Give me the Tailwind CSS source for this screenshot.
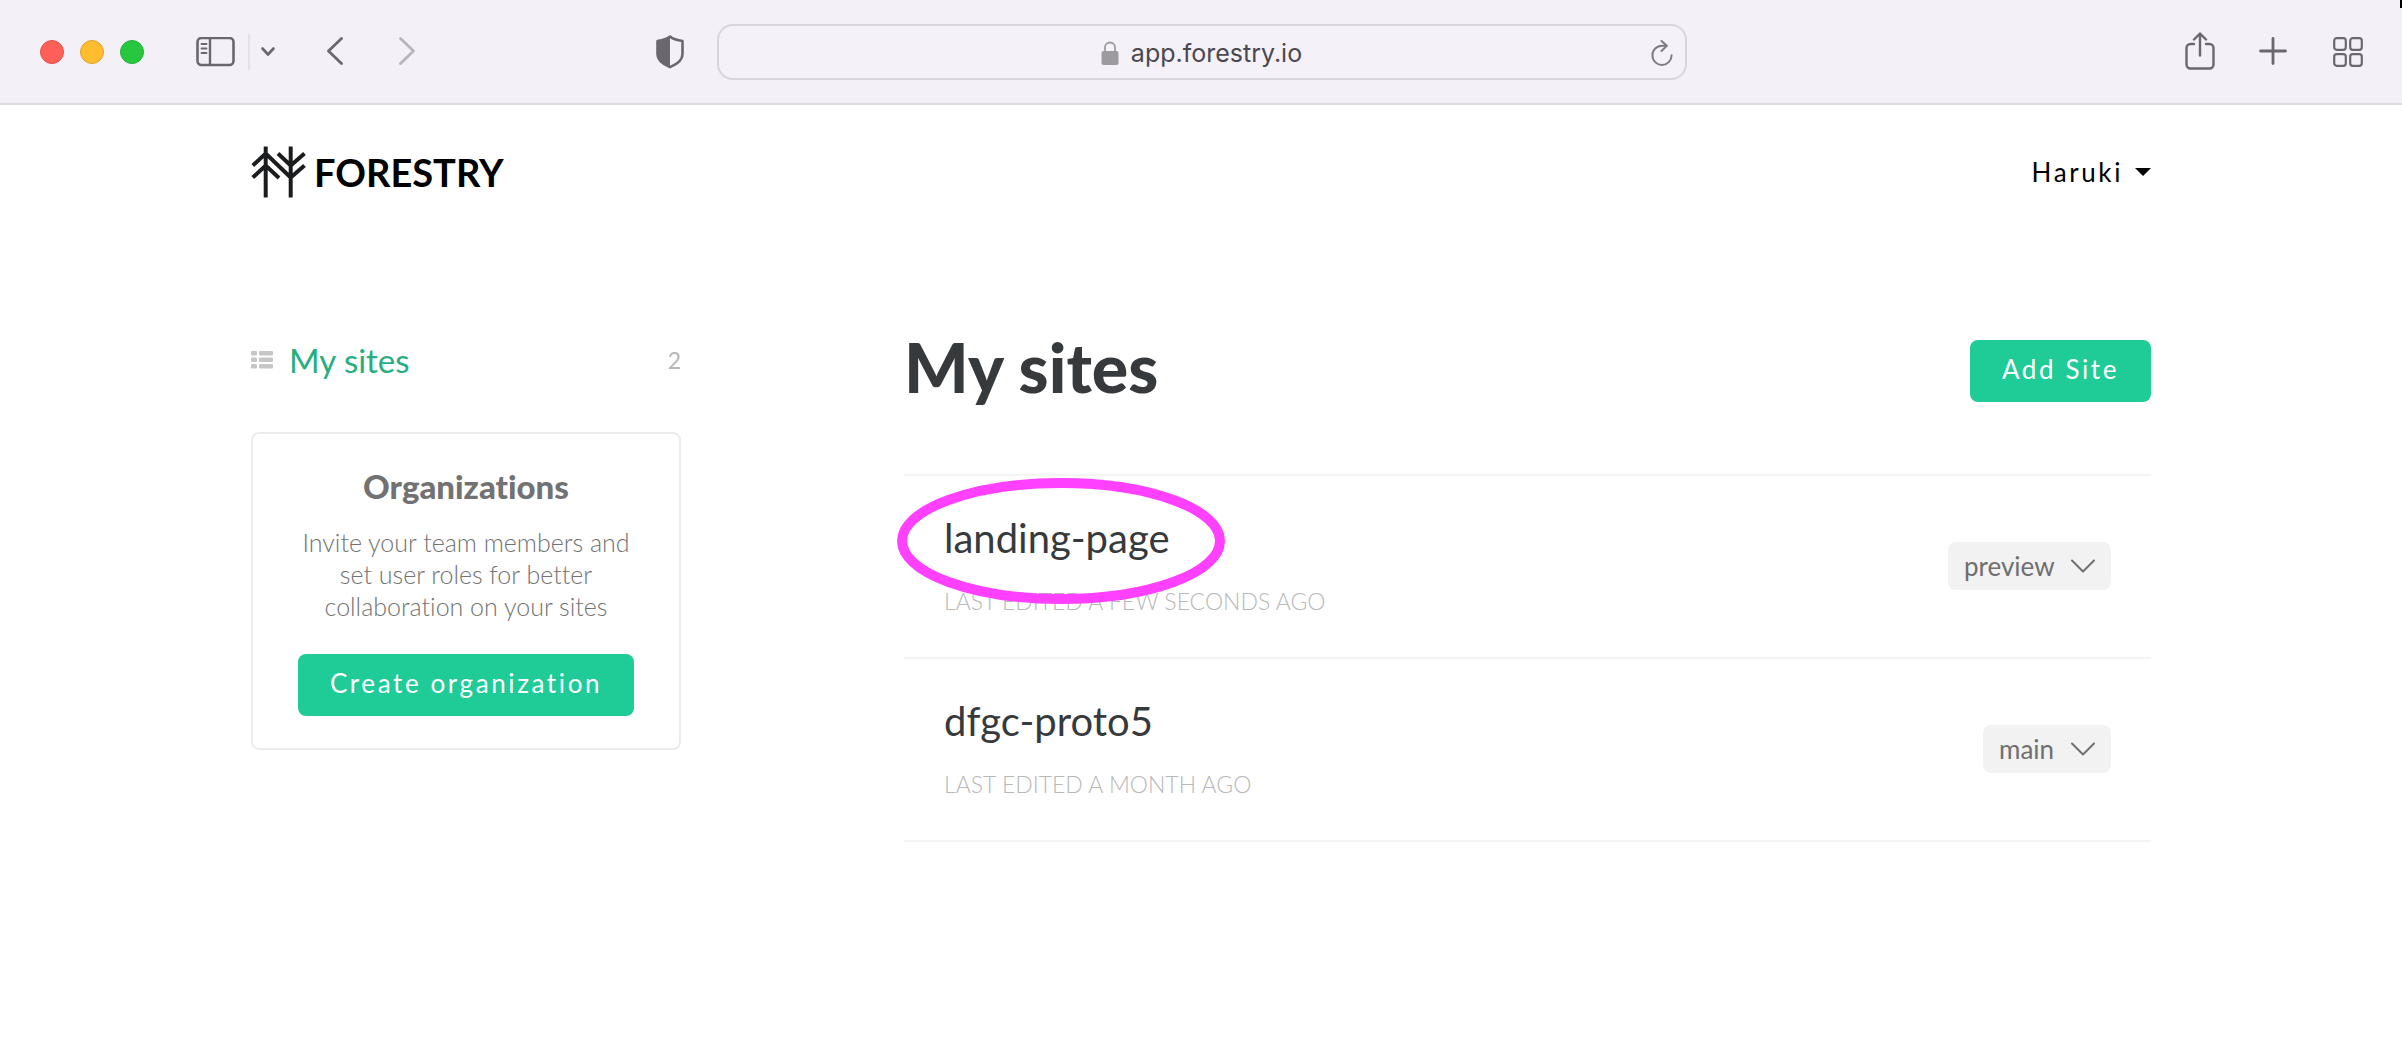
<!DOCTYPE html>
<html lang="en">
<head>
<meta charset="utf-8">
<meta name="viewport" content="width=device-width, initial-scale=1">
<title>My sites - Forestry</title>
<script src="https://cdn.jsdelivr.net/npm/@tailwindcss/browser@4"></script>
</head>
<body class="min-h-screen bg-white font-['Lato',sans-serif] text-black [font-variant-ligatures:none]">

<!-- Browser toolbar -->
<div class="relative flex h-[105px] items-center border-b-2 border-[#dddbdf] bg-[#f3f0f7] text-[#6b676f]">
  <span class="absolute top-0 right-0 h-2 w-[2px] bg-black"></span>
  <div class="flex flex-1 items-center pl-10">
    <div class="flex gap-4">
      <span class="size-6 rounded-full border border-[#e2524a] bg-[#fe5f57]"></span>
      <span class="size-6 rounded-full border border-[#e0a32e] bg-[#febc2e]"></span>
      <span class="size-6 rounded-full border border-[#24b038] bg-[#27c840]"></span>
    </div>
    <button aria-label="Toggle sidebar" class="ml-[52px]">
      <svg class="h-[30px] w-10" viewBox="0 0 40 30" fill="none" stroke="currentColor"><rect x="1.500" y="1" width="36" height="27" rx="4" stroke-width="2.600"/><path d="M14 1v27" stroke-width="2.400"/><path d="M5.500 7h5M5.500 11.500h5M5.500 16h5" stroke-width="1.800" stroke-linecap="round"/></svg>
    </button>
    <span class="ml-3 h-9 w-[2px] bg-[#e4e1e8]"></span>
    <button aria-label="Tab groups" class="ml-[11px]">
      <svg class="h-[10px] w-[14px]" viewBox="0 0 14 10" fill="none" stroke="currentColor" stroke-width="2.600" stroke-linecap="round" stroke-linejoin="round"><path d="M1.500 1.500 7 7.500 12.500 1.500"/></svg>
    </button>
    <button aria-label="Back" class="ml-[52px]">
      <svg class="h-[30px] w-4" viewBox="0 0 16 30" fill="none" stroke="currentColor" stroke-width="2.800" stroke-linecap="round" stroke-linejoin="round"><path d="M14.500 1.500 1.500 14l13 12.500"/></svg>
    </button>
    <button aria-label="Forward" class="ml-14 text-[#b9b5bd]">
      <svg class="h-[30px] w-4" viewBox="0 0 16 30" fill="none" stroke="currentColor" stroke-width="2.800" stroke-linecap="round" stroke-linejoin="round"><path d="M1.500 1.500 14.500 14l-13 12.500"/></svg>
    </button>
    <button aria-label="Privacy report" class="mr-[33px] ml-auto">
      <svg class="h-[34px] w-7" viewBox="0 0 28 34"><path d="M14 1.500C17 4 21.500 5.300 26.500 6V19.200C26.500 24.700 21.500 29 14 32.100 6.500 29 1.500 24.700 1.500 19.200V6C6.500 5.300 11 4 14 1.500Z" fill="none" stroke="currentColor" stroke-width="2.600" stroke-linejoin="round"/><path d="M14 1.500C11 4 6.500 5.300 1.500 6V19.200C1.500 24.700 6.500 29 14 32.100Z" fill="currentColor"/></svg>
    </button>
  </div>
  <div class="flex h-14 w-[970px] items-center rounded-2xl border-2 border-[#d8d5dc] bg-[#f4f1f8] px-3 pt-[2px]">
    <span class="flex-1"></span>
    <label for="address" class="flex items-center gap-3">
      <svg aria-label="Secure" class="h-6 w-[18px] text-[#9d9a9f]" viewBox="0 0 18 24"><path d="M4 11V6.500a5 5 0 0 1 10 0V11" fill="none" stroke="currentColor" stroke-width="1.800"/><rect x="0.500" y="10" width="17" height="14" rx="2" fill="currentColor"/></svg>
      <input id="address" type="text" value="app.forestry.io" class="field-sizing-content bg-transparent font-['Inter',sans-serif] text-[25px] leading-8 text-[#4b484e] outline-none">
    </label>
    <span class="flex flex-1 justify-end">
      <button aria-label="Reload" class="text-[#7f7b83]">
        <svg class="h-[26px] w-[22px]" viewBox="0 0 22 26" fill="none" stroke="currentColor" stroke-width="2" stroke-linecap="round" stroke-linejoin="round"><path d="M15.500 5.700H11A9.600 9.600 0 1 0 20.600 15.300"/><path d="M10.500 1 15.800 5.700 10.500 11"/></svg>
      </button>
    </span>
  </div>
  <div class="flex flex-1 items-center justify-end gap-11 pr-[39px]">
    <button aria-label="Share">
      <svg class="h-10 w-[30px]" viewBox="0 0 30 40" fill="none" stroke="currentColor" stroke-width="2.400" stroke-linecap="round" stroke-linejoin="round"><path d="M9 12H5.500A4 4 0 0 0 1.500 16V32.500A4 4 0 0 0 5.500 36.500H24.500A4 4 0 0 0 28.500 32.500V16A4 4 0 0 0 24.500 12H21"/><path d="M15 23.500V2M9 7.500 15 1.500 21 7.500"/></svg>
    </button>
    <button aria-label="New tab">
      <svg class="h-[30px] w-[30px]" viewBox="0 0 30 30" fill="none" stroke="currentColor" stroke-width="2.800" stroke-linecap="round"><path d="M14 1.500v25M1.500 14h25"/></svg>
    </button>
    <button aria-label="Tab overview">
      <svg class="h-[30px] w-[30px]" viewBox="0 0 30 30" fill="none" stroke="currentColor" stroke-width="2.200"><rect x="1.200" y="1.200" width="11.600" height="11.600" rx="2.500"/><rect x="17.200" y="1.200" width="11.600" height="11.600" rx="2.500"/><rect x="1.200" y="17.200" width="11.600" height="11.600" rx="2.500"/><rect x="17.200" y="17.200" width="11.600" height="11.600" rx="2.500"/></svg>
    </button>
  </div>
</div>

<div class="mx-auto max-w-[1900px]">
  <header class="flex items-center justify-between pt-[41px]">
    <a href="#" class="flex items-center gap-2">
      <svg aria-hidden="true" class="h-[52px] w-[55px]" viewBox="0 0 55 52" fill="none" stroke="#1b1c1d" stroke-width="4"><path d="M14.700 .500V51.500M39.700 .500V51.500M1.800 19.500 14.700 7.500 39.700 31.500 53.500 19.500M1.800 31.500 14.700 19.500 28 32M27 7.500 39.700 19.500 53.500 7.500"/></svg>
      <span class="text-[38px] leading-[48px] font-bold">FORESTRY</span>
    </a>
    <button class="flex items-center gap-3 text-[26px] leading-8 tracking-widest">Haruki
      <svg aria-hidden="true" class="h-2 w-4" viewBox="0 0 16 8"><path d="M0 0h16L8 8z" fill="currentColor"/></svg>
    </button>
  </header>

  <div class="mt-[142px] flex items-start gap-[223px]">
    <aside class="w-[430px] shrink-0">
      <nav>
        <a href="#" class="flex items-center text-[33px] leading-10 text-[#27ae7f]">
          <svg aria-hidden="true" class="mr-4 h-[18px] w-[22px] text-[#c6c6c6]" viewBox="0 0 22 18" fill="currentColor"><rect width="6" height="4.600" rx="1"/><rect x="8" width="14" height="4.600" rx="1"/><rect y="6.500" width="6" height="4.600" rx="1"/><rect x="8" y="6.500" width="14" height="4.600" rx="1"/><rect y="13" width="6" height="4.600" rx="1"/><rect x="8" y="13" width="14" height="4.600" rx="1"/></svg>
          My sites
          <span class="ml-auto text-[23px] text-[#b8b8b8]">2</span>
        </a>
      </nav>
      <section class="mt-[52px] flex flex-col items-center rounded-lg border-2 border-[#ececec] px-11 py-8 text-center text-[#727272]">
        <h2 class="text-[33px] leading-10 font-black">Organizations</h2>
        <p class="mt-5 text-[25px] leading-8 font-light">Invite your team members and set user roles for better collaboration on your sites</p>
        <button class="mt-8 h-[62px] rounded-lg bg-[#1fcb97] px-8 pb-1 text-[26px] leading-8 tracking-widest whitespace-nowrap text-white">Create organization</button>
      </section>
    </aside>

    <main class="min-w-0 flex-1">
      <div class="flex items-start justify-between">
        <h1 class="text-[68px] leading-[54px] font-black text-[#373a3d]">My sites</h1>
        <button class="h-[62px] rounded-lg bg-[#1fcb97] px-8 pb-1 text-[26px] leading-8 tracking-widest whitespace-nowrap text-white">Add Site</button>
      </div>
      <ul class="mt-18 border-t-2 border-[#f4f4f4]">
        <li class="relative flex items-center justify-between border-b-2 border-[#f4f4f4] px-10 pt-[38px] pb-10">
          <div>
            <a href="#" class="block text-[40px] leading-[48px] text-[#373a3d]">landing-page</a>
            <p class="mt-[23px] text-[23px] leading-8 font-light text-[#b8b8b8] uppercase">Last edited a few seconds ago</p>
          </div>
          <div class="relative flex items-center">
            <select aria-label="Branch of landing-page" class="h-12 appearance-none rounded-lg bg-[#f2f2f2] pr-14 pl-4 text-[26px] leading-8 text-[#6f6f6f]"><option>preview</option></select>
            <svg aria-hidden="true" class="pointer-events-none absolute right-4 h-[14px] w-6" viewBox="0 0 24 14" fill="none" stroke="#6f6f6f" stroke-width="2" stroke-linecap="round" stroke-linejoin="round"><path d="M1 1.500 12 12.500 23 1.500"/></svg>
          </div>
          <!-- Highlight ring around the site name -->
          <svg aria-hidden="true" class="pointer-events-none absolute top-[2px] -left-[7px] h-[126px] w-[328px]" viewBox="0 0 328 126"><ellipse cx="164" cy="63" rx="159" ry="58" fill="none" stroke="#ff40ff" stroke-width="10"/></svg>
        </li>
        <li class="flex items-center justify-between border-b-2 border-[#f4f4f4] px-10 pt-[38px] pb-10">
          <div>
            <a href="#" class="block text-[40px] leading-[48px] text-[#373a3d]">dfgc-proto5</a>
            <p class="mt-[23px] text-[23px] leading-8 font-light text-[#b8b8b8] uppercase">Last edited a month ago</p>
          </div>
          <div class="relative flex items-center">
            <select aria-label="Branch of dfgc-proto5" class="h-12 appearance-none rounded-lg bg-[#f2f2f2] pr-14 pl-4 text-[26px] leading-8 text-[#6f6f6f]"><option>main</option></select>
            <svg aria-hidden="true" class="pointer-events-none absolute right-4 h-[14px] w-6" viewBox="0 0 24 14" fill="none" stroke="#6f6f6f" stroke-width="2" stroke-linecap="round" stroke-linejoin="round"><path d="M1 1.500 12 12.500 23 1.500"/></svg>
          </div>
        </li>
      </ul>
    </main>
  </div>
</div>
</body>
</html>
